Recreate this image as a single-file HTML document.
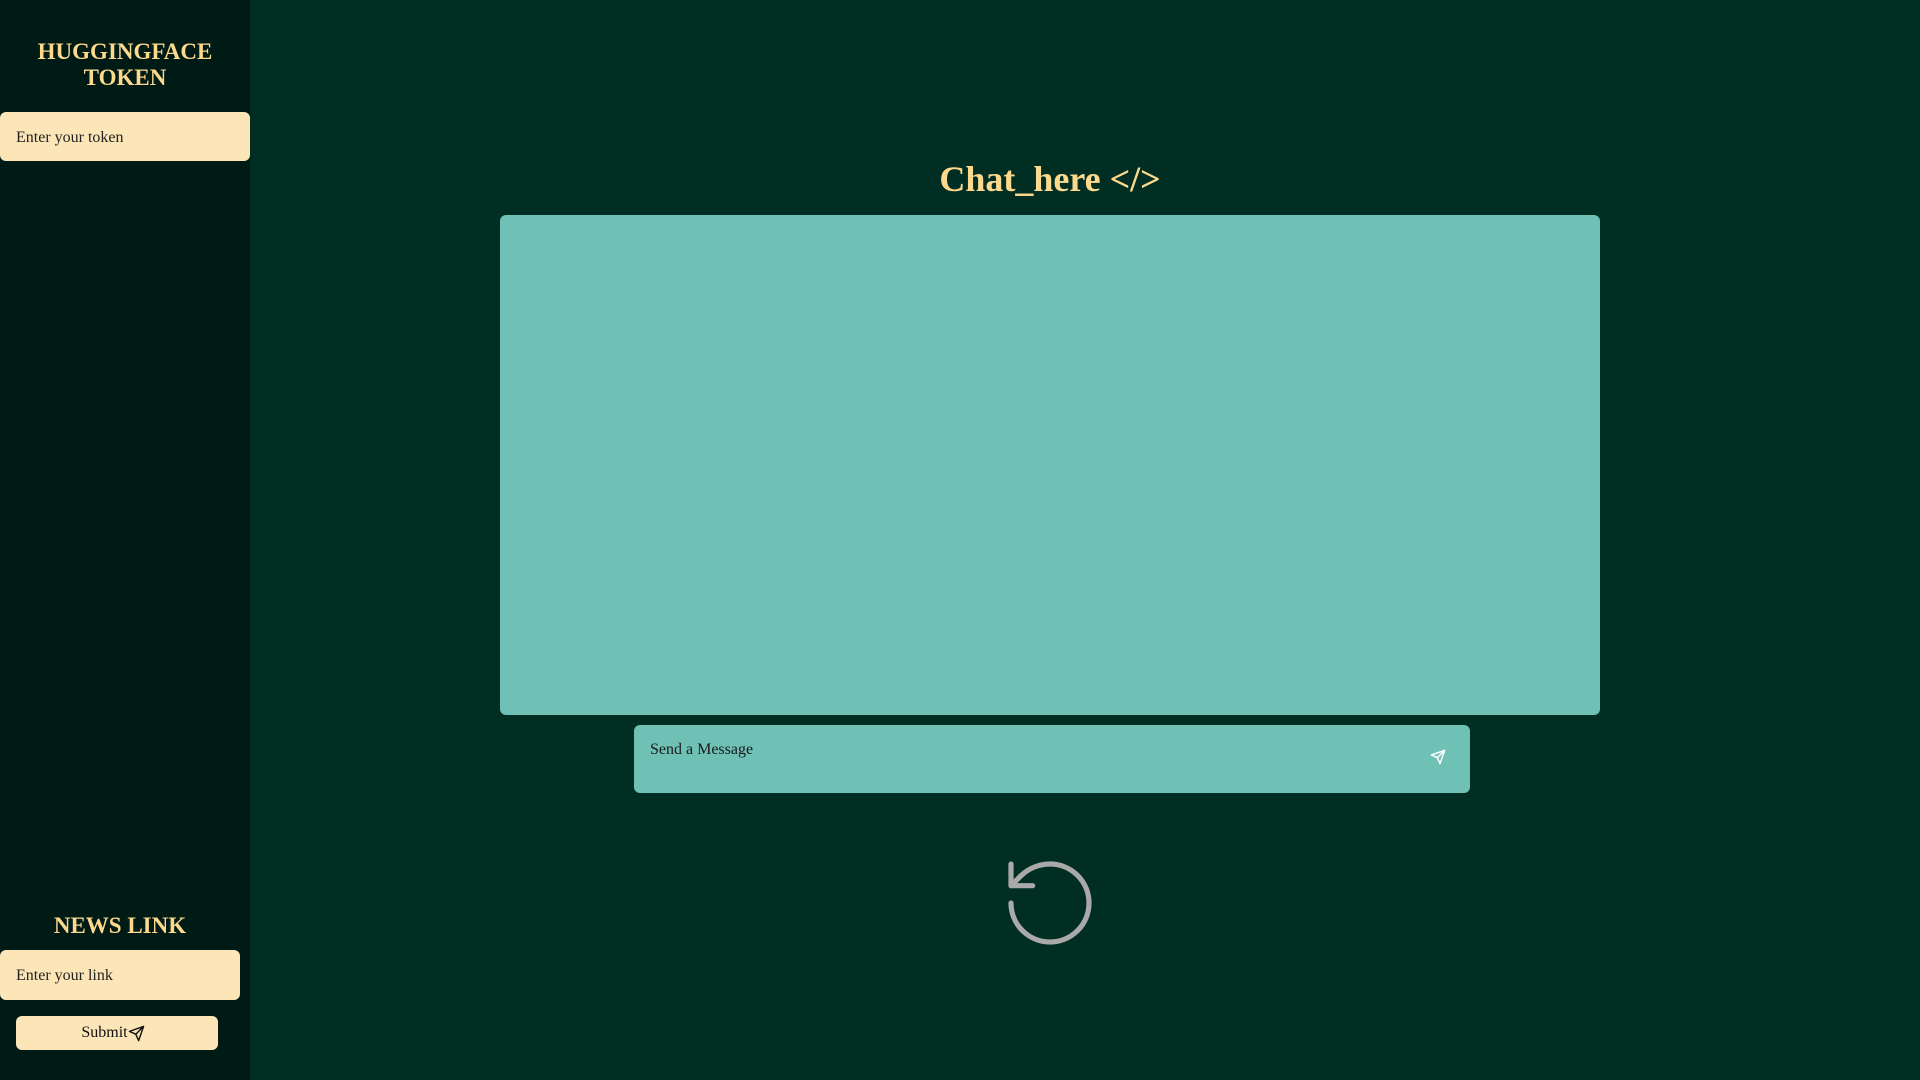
<!DOCTYPE html>
<html><head><meta charset="utf-8"><style>
*{box-sizing:border-box;margin:0;padding:0}
body{width:1920px;height:1080px;background:#002e22;font-family:"Liberation Serif",serif;position:relative;overflow:hidden}
.side{position:absolute;left:0;top:0;width:250px;height:1080px;background:#001a15}
.h{position:absolute;color:#fcd98c;font-weight:bold;text-align:center}
.in{position:absolute;background:#fce6b8;border-radius:6px;color:#222;font-size:16px;padding-left:16px;display:flex;align-items:center}
</style></head><body>
<div class="side">
<div class="h" style="left:0;width:250px;top:39px;font-size:23px;line-height:26px">HUGGINGFACE<br>TOKEN</div>
<div class="in" style="left:0;top:112px;width:250px;height:49px;padding-top:2px">Enter your token</div>
<div class="h" style="left:0;width:240px;top:912px;font-size:23px;line-height:28px">NEWS LINK</div>
<div class="in" style="left:0;top:950px;width:240px;height:50px;padding-top:2px">Enter your link</div>
<div class="in" style="left:16px;top:1016px;width:202px;height:34px;padding:0 8px 0 0;justify-content:center;font-size:16px;color:#111">Submit<svg width="17" height="17" viewBox="0 0 24 24" fill="none" stroke="#111" stroke-width="2" stroke-linejoin="round"><path d="M22 2 11 13M22 2l-7 20-4-9-9-4z"/></svg></div>
</div>
<div class="h" style="left:500px;width:1100px;top:157px;font-size:36px;line-height:44px">Chat_here &lt;/&gt;</div>
<div style="position:absolute;left:500px;top:215px;width:1100px;height:500px;background:#6fc0b5;border-radius:6px"></div>
<div style="position:absolute;left:634px;top:725px;width:836px;height:68px;background:#6fc0b5;border-radius:6px;font-size:16px;color:#1a1a1a;padding:16px 16px">Send a Message
<svg style="position:absolute;left:796px;top:24px" width="16" height="16" viewBox="0 0 24 24" fill="none" stroke="#fff" stroke-width="2.2" stroke-linejoin="round"><path d="M22 2 11 13M22 2l-7 20-4-9-9-4z"/></svg></div>
<svg style="position:absolute;left:998px;top:851px" width="104" height="104" viewBox="0 0 24 24" fill="none" stroke="#a9a9a9" stroke-width="1.2" stroke-linecap="round" stroke-linejoin="round"><path d="M3 12a9 9 0 1 0 9-9 9.75 9.75 0 0 0-6.74 2.74L3 8"/><path d="M3 3v5h5"/></svg>
</body></html>
